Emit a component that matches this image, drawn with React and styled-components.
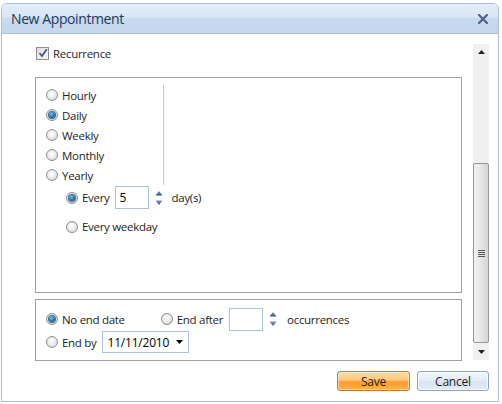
import React from "react";
import styled, { createGlobalStyle } from "styled-components";

const Global = createGlobalStyle`
  html, body {
    margin: 0;
    padding: 0;
    background: #ffffff;
  }
  body {
    font-family: "Open Sans", "Noto Sans", Arial, sans-serif;
    font-size: 11.5px;
    letter-spacing: -0.3px;
    color: #1e1e1e;
  }
`;

const Window = styled.div`
  margin: 3px 0 0 1px;
  width: 498px;
  height: 399px;
  box-sizing: border-box;
  border: 1px solid #a5bfdc;
  border-radius: 6px 6px 0 0;
  display: flex;
  flex-direction: column;
  background: #fff;
  overflow: hidden;
`;

const TitleBar = styled.div`
  height: 29px;
  flex: none;
  display: flex;
  align-items: center;
  justify-content: space-between;
  padding: 0 10px 0 9px;
  border-bottom: 1px solid #a5bfdc;
  background: linear-gradient(#e4edf8 0%, #d9e6f5 45%, #c8daf0 50%, #c4d7ee 100%);
`;

const Title = styled.span`
  font-size: 14px;
  color: #1e395b;
  letter-spacing: -0.4px;
`;

const Body = styled.div`
  flex: 1;
  display: flex;
  padding: 10px 9px 0 33px;
  gap: 11px;
`;

const Content = styled.div`
  width: 429px;
  display: flex;
  flex-direction: column;
`;

const CheckRow = styled.label`
  display: flex;
  align-items: center;
  gap: 4px;
  height: 14px;
  margin: 2px 0 17px 1px;
`;

const CheckBox = styled.span`
  width: 11px;
  height: 11px;
  border: 1px solid #8f8f8f;
  background: linear-gradient(135deg, #dcdcdc, #fbfbfb);
  display: flex;
  align-items: center;
  justify-content: center;
`;

const Panel = styled.div`
  box-sizing: border-box;
  border: 1px solid #a0a0a0;
  height: ${(p) => p.$h}px;
  padding: ${(p) => p.$pad};
  margin-bottom: 6px;
`;

const Column = styled.div`
  width: 117px;
  border-right: 1px solid #c8c8c8;
`;

const Row = styled.div`
  display: flex;
  align-items: center;
  height: ${(p) => p.$h || 20}px;
  padding-left: ${(p) => p.$indent || 0}px;
  margin-top: ${(p) => p.$mt || 0}px;
`;

const Radio = styled.span`
  width: 12px;
  height: 12px;
  box-sizing: border-box;
  border-radius: 50%;
  border: 1px solid #8e9090;
  background: radial-gradient(circle at 45% 40%, #ffffff 0%, #e8e8e8 55%, #c9c9c9 100%);
  margin-right: 4px;
  margin-left: ${(p) => p.$ml || 0}px;
  display: flex;
  align-items: center;
  justify-content: center;
  flex: none;
  &::after {
    content: "";
    display: ${(p) => (p.$on ? "block" : "none")};
    width: 6px;
    height: 6px;
    border-radius: 50%;
    background: radial-gradient(circle at 40% 35%, #7cc4f0 0%, #2478b5 50%, #0e3f6e 100%);
    box-shadow: 0 0 0 1px #3a6a90;
  }
`;

const Label = styled.span`
  white-space: nowrap;
`;

const Input = styled.div`
  box-sizing: border-box;
  width: ${(p) => p.$w}px;
  height: ${(p) => p.$h}px;
  border: 1px solid #a9c2df;
  background: #fff;
  display: flex;
  align-items: center;
  padding-left: 4px;
  margin: 0 ${(p) => p.$mr || 0}px 0 ${(p) => p.$ml || 0}px;
  justify-content: space-between;
  color: #000;
  font-size: 12px;
  letter-spacing: -0.2px;
`;

const Spin = styled.svg`
  flex: none;
  margin-right: ${(p) => p.$mr}px;
`;

const Scrollbar = styled.div`
  width: 16px;
  height: 316px;
  background: #f0f0f0;
  display: flex;
  flex-direction: column;
  align-items: stretch;
`;

const ScrollArrow = styled.div`
  height: 16px;
  display: flex;
  align-items: center;
  justify-content: center;
`;

const Track = styled.div`
  flex: 1;
  display: flex;
  flex-direction: column;
  justify-content: flex-end;
  padding-bottom: 1px;
`;

const Thumb = styled.div`
  height: 180px;
  box-sizing: border-box;
  border: 1px solid #979797;
  border-radius: 2px;
  background: linear-gradient(90deg, #f1f1f1 0%, #e9e9e9 40%, #d4d4d4 100%);
  display: flex;
  align-items: center;
  justify-content: center;
`;

const Footer = styled.div`
  height: 30px;
  display: flex;
  justify-content: flex-end;
  align-items: flex-start;
  gap: 7px;
  padding: 0 9px 0 0;
`;

const Button = styled.button`
  width: ${(p) => p.$w}px;
  height: 20px;
  box-sizing: border-box;
  font-family: inherit;
  font-size: 12px;
  letter-spacing: -0.2px;
  color: #1e1e1e;
  border-radius: 3px;
  padding: 0;
  border: 1px solid ${(p) => (p.$primary ? "#c5782a" : "#8ea4c4")};
  background: ${(p) =>
    p.$primary
      ? "linear-gradient(#ffe0a8 0%, #ffc67a 45%, #fb9a2e 55%, #fcb252 100%)"
      : "linear-gradient(#f2f6fc 0%, #e6edf8 45%, #d8e3f2 55%, #e3ebf7 100%)"};
  box-shadow: inset 0 0 0 1px ${(p) => (p.$primary ? "rgba(255,240,210,0.6)" : "rgba(255,255,255,0.7)")};
`;

const CloseIcon = () => (
  <svg width="10" height="10" viewBox="0 0 10 10">
    <path d="M1 1 L9 9 M9 1 L1 9" stroke="#4f6482" strokeWidth="2.2" strokeLinecap="square" />
  </svg>
);

const SpinArrows = ({ mr }) => (
  <Spin width="8" height="18" viewBox="0 0 8 18" $mr={mr}>
    <defs>
      <linearGradient id="sp" x1="0" y1="0" x2="0" y2="1">
        <stop offset="0" stopColor="#7d9ccc" />
        <stop offset="1" stopColor="#2f4f86" />
      </linearGradient>
    </defs>
    <path d="M4 2 L7.5 6.5 L0.5 6.5 Z" fill="url(#sp)" />
    <path d="M0.5 11.5 L7.5 11.5 L4 16 Z" fill="url(#sp)" />
  </Spin>
);

function App() {
  return (
    <>
      <Global />
      <Window>
        <TitleBar>
          <Title>New Appointment</Title>
          <CloseIcon />
        </TitleBar>
        <Body>
          <Content>
            <CheckRow>
              <CheckBox>
                <svg width="10" height="10" viewBox="0 0 10 10">
                  <path d="M1.5 5 L4 8 L8.8 1.2" stroke="#3c5aa0" strokeWidth="1.8" fill="none" />
                </svg>
              </CheckBox>
              <Label>Recurrence</Label>
            </CheckRow>
            <Panel $h={216} $pad="7px 0 0 10px">
              <Column>
                <Row><Radio /><Label>Hourly</Label></Row>
                <Row><Radio $on /><Label>Daily</Label></Row>
                <Row><Radio /><Label>Weekly</Label></Row>
                <Row><Radio /><Label>Monthly</Label></Row>
                <Row><Radio /><Label>Yearly</Label></Row>
              </Column>
              <Row $h={23} $indent={20} $mt={1}>
                <Radio $on />
                <Label>Every</Label>
                <Input $w={34} $h={23} $ml={5} $mr={6}>5</Input>
                <SpinArrows mr={9} />
                <Label>day(s)</Label>
              </Row>
              <Row $h={35} $indent={20}>
                <Radio />
                <Label>Every weekday</Label>
              </Row>
            </Panel>
            <Panel $h={62} $pad="8px 0 0 10px">
              <Row $h={22}>
                <Radio $on />
                <Label>No end date</Label>
                <Radio $ml={36} />
                <Label>End after</Label>
                <Input $w={34} $h={23} $ml={6} $mr={6} />
                <SpinArrows mr={10} />
                <Label>occurrences</Label>
              </Row>
              <Row $h={24}>
                <Radio />
                <Label>End by</Label>
                <Input $w={87} $h={22} $ml={6}>
                  11/11/2010
                  <svg width="16" height="8" viewBox="0 0 16 8">
                    <path d="M4 2 L11 2 L7.5 6 Z" fill="#000" />
                  </svg>
                </Input>
              </Row>
            </Panel>
          </Content>
          <Scrollbar>
            <ScrollArrow>
              <svg width="7" height="4" viewBox="0 0 7 4">
                <path d="M3.5 0 L7 4 L0 4 Z" fill="#222" />
              </svg>
            </ScrollArrow>
            <Track>
              <Thumb>
                <svg width="7" height="7" viewBox="0 0 7 7">
                  <path d="M0 0.5 H7 M0 2.5 H7 M0 4.5 H7 M0 6.5 H7" stroke="#555" strokeWidth="1" />
                </svg>
              </Thumb>
            </Track>
            <ScrollArrow>
              <svg width="7" height="4" viewBox="0 0 7 4">
                <path d="M0 0 L7 0 L3.5 4 Z" fill="#222" />
              </svg>
            </ScrollArrow>
          </Scrollbar>
        </Body>
        <Footer>
          <Button $primary $w={73}>Save</Button>
          <Button $w={72}>Cancel</Button>
        </Footer>
      </Window>
    </>
  );
}

export default App;
